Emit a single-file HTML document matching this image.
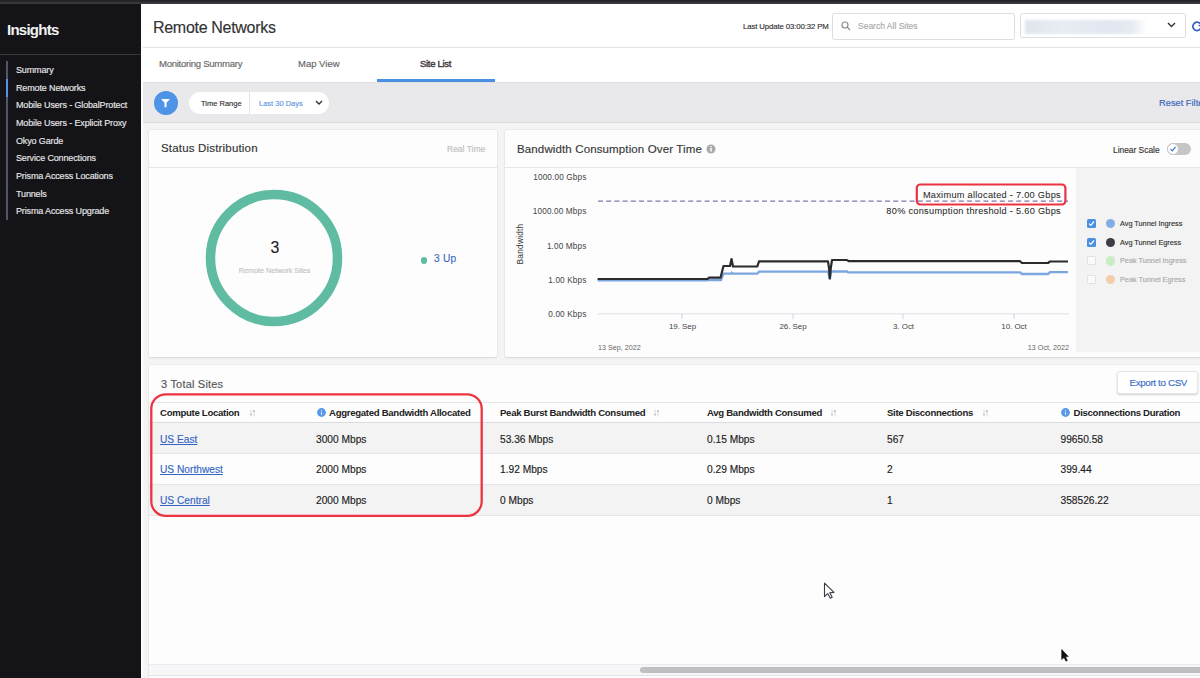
<!DOCTYPE html>
<html><head><meta charset="utf-8">
<style>
*{margin:0;padding:0;box-sizing:border-box}
html,body{width:1200px;height:678px;overflow:hidden;background:#f4f4f5;font-family:"Liberation Sans",sans-serif;color:#333}
.a{position:absolute;white-space:nowrap;-webkit-text-stroke:0.15px}
.th,#side .t,.bt{-webkit-text-stroke:0}
#topbar{left:0;top:0;width:1200px;height:4px;background:linear-gradient(#232327 0,#26262a 40%,#3a3a3e 60%,#36363a 100%)}
#side{left:0;top:4px;width:141px;height:674px;background:#141418}
#side .hd{left:0;top:0;width:141px;height:51px;border-bottom:1px solid #3a3a3e}
#side .t{left:7px;top:17px;font-size:15px;font-weight:bold;color:#f2f2f2;letter-spacing:-0.75px}
#side .vl{left:6.3px;top:57px;width:1.8px;height:159px;background:#4f5668}
#side .bl{left:6.3px;top:74.5px;width:1.8px;height:18px;background:#5b8fe0}
#side .it{left:16px;font-size:9px;color:#e8e8e8;letter-spacing:-0.14px}
#main{left:141px;top:4px;width:1059px;height:674px;background:#ececec}
#hdr{left:141px;top:4px;width:1059px;height:44px;background:#fff;border-bottom:1px solid #e4e4e4}
#tabs{left:141px;top:48px;width:1059px;height:34.5px;background:#fff;border-bottom:1px solid #dcdcdc}
.tab{font-size:9.5px;color:#666;letter-spacing:-0.25px}
.th{font-size:9.6px;font-weight:bold;color:#222;letter-spacing:-0.3px}
.td{font-size:10.2px;color:#222}
.lk{color:#3465c4;text-decoration:underline}
.card{background:#fdfdfd;border-radius:2px;box-shadow:0 0 0 0.6px #e6e6e8,0 1px 1.5px rgba(0,0,0,.16)}
</style></head><body>
<div class="a" id="topbar"></div>
<div class="a" id="side">
  <div class="a hd"><div class="a t">Insights</div></div>
  <div class="a vl"></div><div class="a bl"></div>
  <div class="a it" style="top:61.2px">Summary</div>
  <div class="a it" style="top:78.7px">Remote Networks</div>
  <div class="a it" style="top:96.3px">Mobile Users - GlobalProtect</div>
  <div class="a it" style="top:113.9px">Mobile Users - Explicit Proxy</div>
  <div class="a it" style="top:131.6px">Okyo Garde</div>
  <div class="a it" style="top:149.3px">Service Connections</div>
  <div class="a it" style="top:166.9px">Prisma Access Locations</div>
  <div class="a it" style="top:184.6px">Tunnels</div>
  <div class="a it" style="top:202.2px">Prisma Access Upgrade</div>
</div>
<div class="a" id="hdr">
  <div class="a" style="left:12px;top:14.5px;font-size:16px;color:#333;letter-spacing:-0.3px">Remote Networks</div>
</div>
<div class="a" id="tabs">
  <div class="a tab" style="left:18px;top:10px">Monitoring Summary</div>
  <div class="a tab" style="left:157px;top:10px;letter-spacing:0">Map View</div>
  <div class="a tab" style="left:279px;top:10px;color:#3a3a3a;letter-spacing:-0.3px;-webkit-text-stroke:0.4px">Site List</div>
  <div class="a" style="left:236.3px;top:31px;width:117.7px;height:2.5px;background:#4a90e2"></div>
</div>

<div class="a" style="left:743px;top:21.5px;font-size:7.8px;color:#333;letter-spacing:-0.12px">Last Update 03:00:32 PM</div>
<div class="a" style="left:832px;top:12.5px;width:183px;height:27px;border:1px solid #dedede;border-radius:2.5px;background:#fff"></div>
<svg class="a" style="left:841px;top:21px" width="10" height="10" viewBox="0 0 10 10"><circle cx="4" cy="4" r="3" fill="none" stroke="#888" stroke-width="1.1"/><line x1="6.2" y1="6.2" x2="9" y2="9" stroke="#888" stroke-width="1.2"/></svg>
<div class="a" style="left:858px;top:21px;font-size:8.5px;color:#aaa">Search All Sites</div>
<div class="a" style="left:1019.5px;top:12.5px;width:166px;height:25px;border:1px solid #dedede;border-radius:2.5px;background:#fff"></div>
<div class="a" style="left:1025px;top:20px;width:122px;height:14px;background:linear-gradient(90deg,#e0e5ee,#e8ecf3 30%,#e2e7f0 70%,#e6ebf2 88%,rgba(255,255,255,0));filter:blur(0.8px)"></div>
<svg class="a" style="left:1166.8px;top:21.8px" width="9" height="6" viewBox="0 0 9 6"><path d="M1 1 L4.5 4.5 L8 1" fill="none" stroke="#333" stroke-width="1.4"/></svg>
<svg class="a" style="left:1190.7px;top:20px" width="12" height="12" viewBox="0 0 12 12"><path d="M10.2 7.2 A4.2 4.2 0 1 1 9.2 3.6" fill="none" stroke="#3262c6" stroke-width="1.7"/><path d="M7.6 5.5 H11.5 V2" fill="none" stroke="#3262c6" stroke-width="1.7"/></svg>
<!-- filter bar -->
<div class="a" style="left:141px;top:81.5px;width:1059px;height:41.5px;background:#e9e9eb;border-top:1px solid #e0e0e2;border-bottom:1px solid #dcdcdf"></div>
<div class="a" style="left:141px;top:4px;width:1.5px;height:674px;background:#fdfdfd"></div>
<div class="a" style="left:153.5px;top:91px;width:24px;height:24px;border-radius:50%;background:#4d93e6"></div>
<svg class="a" style="left:159px;top:97px" width="12" height="12" viewBox="0 0 12 12"><path d="M2.6 1.9 H10.4 Q10.6 2.2 10.3 2.8 L7.5 5.8 V10.3 H5.5 V5.8 L2.7 2.8 Q2.4 2.2 2.6 1.9 Z" fill="#fff"/></svg>
<div class="a" style="left:189px;top:92px;width:140px;height:22px;border-radius:11px;background:#fff"></div>
<div class="a" style="left:249px;top:92px;width:1px;height:22px;background:#e3e3e3"></div>
<div class="a" style="left:201px;top:99.3px;font-size:7.5px;color:#333">Time Range</div>
<div class="a" style="left:259px;top:99.3px;font-size:7.5px;color:#5f99e6">Last 30 Days</div>
<svg class="a" style="left:315px;top:100px" width="8" height="6" viewBox="0 0 8 6"><path d="M1 1 L4 4 L7 1" fill="none" stroke="#333" stroke-width="1.4"/></svg>
<div class="a" style="left:1159px;top:97.5px;font-size:9.3px;color:#3a64bb">Reset Filters</div>

<!-- status card -->
<div class="a card" style="left:149px;top:129.5px;width:348px;height:227px"></div>
<div class="a" style="left:149px;top:167px;width:348px;height:1px;background:#e6e6e8"></div>
<div class="a" style="left:161px;top:141.5px;font-size:11.5px;color:#333;letter-spacing:0.18px">Status Distribution</div>
<div class="a" style="left:447px;top:143.5px;font-size:8.5px;color:#c0c0c0">Real Time</div>
<svg class="a" style="left:204px;top:188px" width="140" height="140" viewBox="0 0 140 140"><circle cx="70" cy="70" r="63.5" fill="none" stroke="#5fbca2" stroke-width="9.5"/></svg>
<div class="a" style="left:264.8px;top:239.3px;width:20px;text-align:center;font-size:15.8px;color:#222">3</div>
<div class="a" style="left:224.5px;top:265.8px;width:100px;text-align:center;font-size:7.3px;color:#c4c4c4;letter-spacing:-0.05px">Remote Network Sites</div>
<div class="a" style="left:420.8px;top:257px;width:6.6px;height:6.6px;border-radius:50%;background:#5fbca2"></div>
<div class="a" style="left:434px;top:252.8px;font-size:10.2px;color:#3d6bbf;letter-spacing:0.2px">3 Up</div>
<!-- bandwidth card -->
<div class="a card" style="left:505px;top:129.5px;width:700px;height:227px"></div>
<div class="a" style="left:505px;top:167.3px;width:695px;height:1px;background:#e6e6e8"></div>
<div class="a" style="left:517px;top:142.5px;font-size:11.5px;color:#383838;letter-spacing:0.13px">Bandwidth Consumption Over Time</div>
<svg class="a" style="left:706px;top:144px" width="10" height="10" viewBox="0 0 10 10"><circle cx="5" cy="5" r="4.5" fill="#aaa"/><rect x="4.3" y="4" width="1.4" height="3.6" fill="#fff"/><circle cx="5" cy="2.8" r=".8" fill="#fff"/></svg>
<div class="a" style="left:1113px;top:144.5px;font-size:8.4px;color:#333">Linear Scale</div>
<div class="a" style="left:1167px;top:143px;width:24px;height:12px;border-radius:6px;background:#c6c5c8"></div>
<div class="a" style="left:1167px;top:143px;width:12px;height:12px;border-radius:50%;background:#fff;border:1px solid #c6c5c8"></div>
<svg class="a" style="left:1169px;top:145px" width="8" height="8" viewBox="0 0 8 8"><path d="M1.5 4 L3.3 5.8 L6.5 2" fill="none" stroke="#3d7bd6" stroke-width="1.2"/></svg>
<div class="a" style="left:1076px;top:168.3px;width:124px;height:183.5px;background:#f3f3f4"></div>

<!-- chart -->
<svg class="a" style="left:505px;top:168px" width="571" height="188" viewBox="505 168 571 188">
<g font-family="Liberation Sans" font-size="8.2" fill="#444" text-anchor="end" letter-spacing="0.15">
<text x="586.5" y="179.5">1000.00 Gbps</text>
<text x="586.5" y="213.5">1000.00 Mbps</text>
<text x="586.5" y="248.5">1.00 Mbps</text>
<text x="586.5" y="282.5">1.00 Kbps</text>
<text x="586.5" y="317">0.00 Kbps</text>
</g>
<text x="0" y="0" font-family="Liberation Sans" font-size="8.4" fill="#333" text-anchor="middle" letter-spacing="0.2" transform="translate(523 244) rotate(-90)">Bandwidth</text>
<line x1="597.5" y1="313.8" x2="1069" y2="313.8" stroke="#dfe0ea" stroke-width="1"/>
<g stroke="#cfd0dc" stroke-width="1"><line x1="682" y1="314" x2="682" y2="319"/><line x1="793" y1="314" x2="793" y2="319"/><line x1="903" y1="314" x2="903" y2="319"/><line x1="1014" y1="314" x2="1014" y2="319"/></g>
<g font-family="Liberation Sans" font-size="7.9" fill="#444" text-anchor="middle">
<text x="682.5" y="328.5">19. Sep</text>
<text x="793" y="328.5">26. Sep</text>
<text x="903.5" y="328.5">3. Oct</text>
<text x="1014" y="328.5">10. Oct</text>
</g>
<text x="598" y="350" font-family="Liberation Sans" font-size="7.2" fill="#666">13 Sep, 2022</text>
<text x="1069" y="350" font-family="Liberation Sans" font-size="7.2" fill="#666" text-anchor="end">13 Oct, 2022</text>
<line x1="598" y1="201.2" x2="1068" y2="201.2" stroke="#8078b0" stroke-width="1.2" stroke-dasharray="5,3.2"/>
<g font-family="Liberation Sans" font-size="9.2" fill="#2a2a2a" stroke="#2a2a2a" stroke-width="0.06" text-anchor="end" letter-spacing="0.29">
<text x="1061" y="198">Maximum allocated - 7.00 Gbps</text>
<text x="1061" y="213.5">80% consumption threshold - 5.60 Gbps</text>
</g>
<rect x="916.8" y="184.5" width="148.6" height="20" rx="3.5" fill="none" stroke="#ec3440" stroke-width="2.2"/>
<path d="M597.6,280.3 H707.5 L708.5,280 H721 L723.5,273.7 H731 L731.7,272.8 L732.4,273.7 H757.3 L759,271.7 H828.3 L829.6,279.2 L831,271.5 H847 L848,272.4 H1020 L1022,274 H1048 L1050,272.2 H1068" fill="none" stroke="#7ba6e0" stroke-width="2.3"/>
<path d="M597.6,279 H707.5 L709,277.7 H720.5 L723.5,266 H730 L731.5,259 L733,266.5 H757.3 L759,261.3 H828 L829,268 L829.9,278.5 L830.8,268 L832,260 H847 L848.5,261.2 H1020 L1022,263 H1048 L1050,261.5 H1068" fill="none" stroke="#2b2b2f" stroke-width="2.2" stroke-linejoin="round"/>
</svg>
<!-- legend -->
<div class="a" style="left:1087px;top:219px;width:9px;height:9px;border-radius:1.5px;background:#4a90e2"></div>
<div class="a" style="left:1087px;top:238px;width:9px;height:9px;border-radius:1.5px;background:#4a90e2"></div>
<div class="a" style="left:1087px;top:256px;width:9px;height:9px;border-radius:1.5px;border:1px solid #e0e0e0;background:#fafafa"></div>
<div class="a" style="left:1087px;top:275px;width:9px;height:9px;border-radius:1.5px;border:1px solid #e0e0e0;background:#fafafa"></div>
<svg class="a" style="left:1087px;top:219px" width="9" height="9" viewBox="0 0 9 9"><path d="M2 4.6 L3.8 6.4 L7 2.5" fill="none" stroke="#fff" stroke-width="1.2"/></svg>
<svg class="a" style="left:1087px;top:238px" width="9" height="9" viewBox="0 0 9 9"><path d="M2 4.6 L3.8 6.4 L7 2.5" fill="none" stroke="#fff" stroke-width="1.2"/></svg>
<div class="a" style="left:1105.5px;top:218.5px;width:9.5px;height:9.5px;border-radius:50%;background:#84ade6"></div>
<div class="a" style="left:1105.5px;top:237.5px;width:9.5px;height:9.5px;border-radius:50%;background:#3b3d44"></div>
<div class="a" style="left:1105.5px;top:256px;width:9.5px;height:9.5px;border-radius:50%;background:#c9ecc6"></div>
<div class="a" style="left:1105.5px;top:274.5px;width:9.5px;height:9.5px;border-radius:50%;background:#f3cdab"></div>
<div class="a" style="left:1120px;top:219px;font-size:7.3px;color:#333">Avg Tunnel Ingress</div>
<div class="a" style="left:1120px;top:238px;font-size:7.3px;color:#333">Avg Tunnel Egress</div>
<div class="a" style="left:1120px;top:256px;font-size:7.3px;color:#aaa">Peak Tunnel Ingress</div>
<div class="a" style="left:1120px;top:275px;font-size:7.3px;color:#aaa">Peak Tunnel Egress</div>

<!-- table card -->
<div class="a card" style="left:149px;top:365px;width:1060px;height:320px"></div>
<div class="a" style="left:161px;top:377.5px;font-size:11px;color:#555;letter-spacing:0.2px">3 Total Sites</div>
<div class="a" style="left:1117px;top:370.5px;width:81px;height:23.5px;border-radius:3px;background:#fff;border:1px solid #e6e6e6;box-shadow:0 1px 2px rgba(0,0,0,.18)"></div>
<div class="a" style="left:1129.5px;top:377.2px;font-size:9.8px;color:#3a6cc8;letter-spacing:-0.35px">Export to CSV</div>
<div class="a" style="left:149px;top:401.5px;width:1051px;height:1px;background:#e6e6e8"></div>
<div class="a" style="left:149px;top:422px;width:1051px;height:1px;background:#dcdcde"></div>
<div class="a" style="left:149px;top:423px;width:1051px;height:29.5px;background:#f3f3f4"></div>
<div class="a" style="left:149px;top:452.5px;width:1051px;height:1px;background:#e6e6e8"></div>
<div class="a" style="left:149px;top:483.5px;width:1051px;height:1px;background:#e6e6e8"></div>
<div class="a" style="left:149px;top:484.5px;width:1051px;height:30px;background:#f3f3f4"></div>
<div class="a" style="left:149px;top:514.5px;width:1051px;height:1px;background:#e6e6e8"></div>
<div class="a th" style="left:160px;top:407.3px">Compute Location</div>
<div class="a th" style="left:329px;top:407.3px">Aggregated Bandwidth Allocated</div>
<svg class="a" style="left:316.7px;top:407.6px" width="9" height="9" viewBox="0 0 9 9"><circle cx="4.5" cy="4.5" r="4.4" fill="#5799e6"/><rect x="4" y="3.9" width="1" height="3" fill="#dbe8f8"/><circle cx="4.5" cy="2.6" r=".6" fill="#dbe8f8"/></svg>
<div class="a th" style="left:500px;top:407.3px">Peak Burst Bandwidth Consumed</div>
<div class="a th" style="left:707px;top:407.3px">Avg Bandwidth Consumed</div>
<div class="a th" style="left:887px;top:407.3px">Site Disconnections</div>
<div class="a th" style="left:1073.5px;top:407.3px">Disconnections Duration</div>
<svg class="a" style="left:1061.2px;top:407.6px" width="9" height="9" viewBox="0 0 9 9"><circle cx="4.5" cy="4.5" r="4.4" fill="#5799e6"/><rect x="4" y="3.9" width="1" height="3" fill="#dbe8f8"/><circle cx="4.5" cy="2.6" r=".6" fill="#dbe8f8"/></svg>
<svg class="a" style="left:248.5px;top:409px" width="7" height="8" viewBox="0 0 7 8"><path d="M2 0.5 V6.5" stroke="#d4d4d4" stroke-width="1"/><path d="M0.9 5.2 L2 6.8 L3.1 5.2 Z" fill="#aaa"/><path d="M5 1.5 V7.2" stroke="#d4d4d4" stroke-width="1"/><path d="M3.9 2.6 L5 1 L6.1 2.6 Z" fill="#999"/></svg>
<svg class="a" style="left:653px;top:409px" width="7" height="8" viewBox="0 0 7 8"><path d="M2 0.5 V6.5" stroke="#d4d4d4" stroke-width="1"/><path d="M0.9 5.2 L2 6.8 L3.1 5.2 Z" fill="#aaa"/><path d="M5 1.5 V7.2" stroke="#d4d4d4" stroke-width="1"/><path d="M3.9 2.6 L5 1 L6.1 2.6 Z" fill="#999"/></svg>
<svg class="a" style="left:830px;top:409px" width="7" height="8" viewBox="0 0 7 8"><path d="M2 0.5 V6.5" stroke="#d4d4d4" stroke-width="1"/><path d="M0.9 5.2 L2 6.8 L3.1 5.2 Z" fill="#aaa"/><path d="M5 1.5 V7.2" stroke="#d4d4d4" stroke-width="1"/><path d="M3.9 2.6 L5 1 L6.1 2.6 Z" fill="#999"/></svg>
<svg class="a" style="left:982px;top:409px" width="7" height="8" viewBox="0 0 7 8"><path d="M2 0.5 V6.5" stroke="#d4d4d4" stroke-width="1"/><path d="M0.9 5.2 L2 6.8 L3.1 5.2 Z" fill="#aaa"/><path d="M5 1.5 V7.2" stroke="#d4d4d4" stroke-width="1"/><path d="M3.9 2.6 L5 1 L6.1 2.6 Z" fill="#999"/></svg>
<div class="a td lk" style="left:160px;top:433.5px">US East</div>
<div class="a td" style="left:316px;top:433.5px">3000 Mbps</div>
<div class="a td" style="left:500px;top:433.5px">53.36 Mbps</div>
<div class="a td" style="left:707px;top:433.5px">0.15 Mbps</div>
<div class="a td" style="left:887px;top:433.5px">567</div>
<div class="a td" style="left:1060.5px;top:433.5px">99650.58</div>
<div class="a td lk" style="left:160px;top:464.2px">US Northwest</div>
<div class="a td" style="left:316px;top:464.2px">2000 Mbps</div>
<div class="a td" style="left:500px;top:464.2px">1.92 Mbps</div>
<div class="a td" style="left:707px;top:464.2px">0.29 Mbps</div>
<div class="a td" style="left:887px;top:464.2px">2</div>
<div class="a td" style="left:1060.5px;top:464.2px">399.44</div>
<div class="a td lk" style="left:160px;top:494.9px">US Central</div>
<div class="a td" style="left:316px;top:494.9px">2000 Mbps</div>
<div class="a td" style="left:500px;top:494.9px">0 Mbps</div>
<div class="a td" style="left:707px;top:494.9px">0 Mbps</div>
<div class="a td" style="left:887px;top:494.9px">1</div>
<div class="a td" style="left:1060.5px;top:494.9px">358526.22</div>
<svg class="a" style="left:149px;top:392px" width="336" height="127" viewBox="149 392 336 127"><rect x="151.3" y="394.3" width="330.4" height="121.6" rx="14.5" fill="none" stroke="#ec3440" stroke-width="2.3"/></svg>
<!-- scrollbar -->
<div class="a" style="left:149px;top:664px;width:1051px;height:12px;background:#f7f7f9;border-top:1px solid #ececee;border-bottom:1px solid #e4e4e6"></div>
<div class="a" style="left:640px;top:667.3px;width:570px;height:6px;border-radius:3px;background:#c0bfc3"></div>
<!-- cursors -->
<svg class="a" style="left:822px;top:581px" width="16" height="20" viewBox="0 0 16 20"><path d="M2.5 2.2 V15.6 L5.7 12.6 L8.3 17.2 L10.2 16.2 L7.8 11.8 L12 11.4 Z" fill="#fff" stroke="#3a3a44" stroke-width="1.1" stroke-linejoin="round"/></svg>
<svg class="a" style="left:1059px;top:647px" width="12" height="16" viewBox="0 0 12 16"><path d="M2.7 2.5 V12.5 L5 10.5 L7 14.2 L8.3 13.5 L6.5 9.8 L9.3 9.6 Z" fill="#111" stroke="#111" stroke-width=".6" stroke-linejoin="round"/></svg>
</body></html>
